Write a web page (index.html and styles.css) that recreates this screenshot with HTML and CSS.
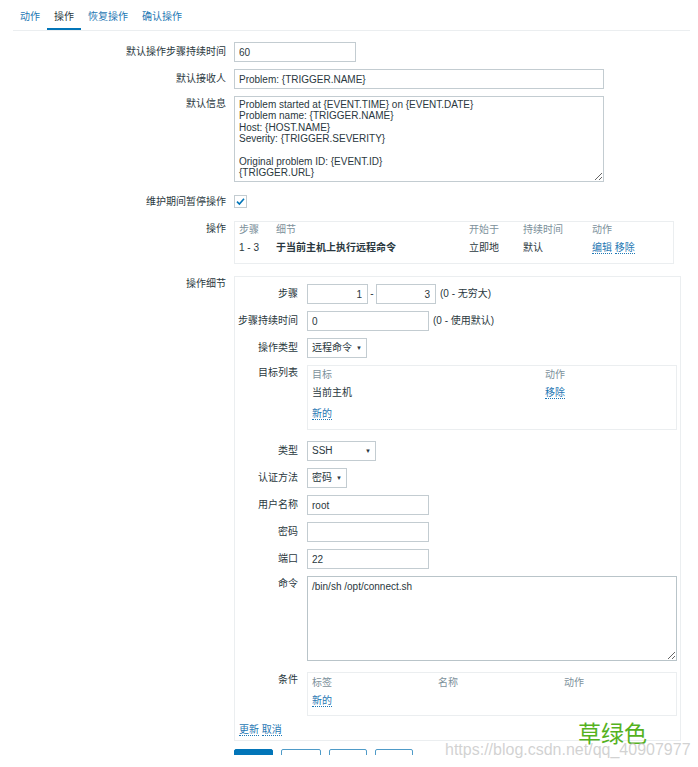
FILE: index.html
```html
<!DOCTYPE html>
<html lang="zh-CN">
<head>
    <meta charset="UTF-8">
    <meta name="viewport" content="width=device-width, initial-scale=1.0">
    <title>操作</title>
    <link rel="stylesheet" href="styles.css">
</head>
<body>
    <nav class="tabs">
        <a class="tab">动作</a>
        <a class="tab active">操作</a>
        <a class="tab">恢复操作</a>
        <a class="tab">确认操作</a>
    </nav>

    <form class="form">
        <div class="row">
            <label class="lbl">默认操作步骤持续时间</label>
            <input class="inp w122" value="60">
        </div>
        <div class="row">
            <label class="lbl">默认接收人</label>
            <input class="inp w370" value="Problem: {TRIGGER.NAME}">
        </div>
        <div class="row">
            <label class="lbl top">默认信息</label>
            <textarea class="txt msg">Problem started at {EVENT.TIME} on {EVENT.DATE}
Problem name: {TRIGGER.NAME}
Host: {HOST.NAME}
Severity: {TRIGGER.SEVERITY}

Original problem ID: {EVENT.ID}
{TRIGGER.URL}</textarea>
        </div>
        <div class="row check-row">
            <label class="lbl">维护期间暂停操作</label>
            <span class="check">
                <svg width="11" height="11" viewBox="0 0 11 11"><path d="M2 5.6 L4.4 8 L9 2.8" fill="none" stroke="#0275b8" stroke-width="1.6"/></svg>
            </span>
        </div>
        <div class="row ops-row">
            <label class="lbl top">操作</label>
            <div class="list ops">
                <div class="ops-grid head">
                    <span>步骤</span><span>细节</span><span>开始于</span><span>持续时间</span><span>动作</span>
                </div>
                <div class="ops-grid data">
                    <span>1 - 3</span><b>于当前主机上执行远程命令</b><span>立即地</span><span>默认</span>
                    <span><a class="link">编辑</a> <a class="link">移除</a></span>
                </div>
            </div>
        </div>
        <div class="row">
            <label class="lbl top">操作细节</label>
            <div class="details">
                <div class="row">
                    <label class="lbl sub">步骤</label>
                    <input class="inp num w61" value="1">
                    <span class="dash">-</span>
                    <input class="inp num w60" value="3">
                    <span class="hint">(0 - 无穷大)</span>
                </div>
                <div class="row">
                    <label class="lbl sub">步骤持续时间</label>
                    <input class="inp w122" value="0">
                    <span class="hint">(0 - 使用默认)</span>
                </div>
                <div class="row">
                    <label class="lbl sub">操作类型</label>
                    <div class="select w60"><span>远程命令</span><span class="caret">▼</span></div>
                </div>
                <div class="row box-row">
                    <label class="lbl sub top">目标列表</label>
                    <div class="list targets">
                        <div class="t-grid head"><span>目标</span><span>动作</span></div>
                        <div class="t-grid"><span>当前主机</span><span><a class="link">移除</a></span></div>
                        <div class="new"><a class="link">新的</a></div>
                    </div>
                </div>
                <div class="row">
                    <label class="lbl sub">类型</label>
                    <div class="select w69"><span>SSH</span><span class="caret">▼</span></div>
                </div>
                <div class="row">
                    <label class="lbl sub">认证方法</label>
                    <div class="select w40"><span>密码</span><span class="caret">▼</span></div>
                </div>
                <div class="row">
                    <label class="lbl sub">用户名称</label>
                    <input class="inp w122" value="root">
                </div>
                <div class="row">
                    <label class="lbl sub">密码</label>
                    <input class="inp w122" type="password" value="">
                </div>
                <div class="row">
                    <label class="lbl sub">端口</label>
                    <input class="inp w122" value="22">
                </div>
                <div class="row box-row">
                    <label class="lbl sub top">命令</label>
                    <textarea class="txt cmd">/bin/sh /opt/connect.sh</textarea>
                </div>
                <div class="row">
                    <label class="lbl sub top">条件</label>
                    <div class="list conds">
                        <div class="c-grid head"><span>标签</span><span>名称</span><span>动作</span></div>
                        <div class="new"><a class="link">新的</a></div>
                    </div>
                </div>
                <div class="actions"><a class="link">更新</a> <a class="link">取消</a></div>
            </div>
        </div>
        <div class="buttons">
            <button type="button" class="btn main"></button>
            <button type="button" class="btn"></button>
            <button type="button" class="btn w38"></button>
            <button type="button" class="btn w38"></button>
        </div>
    </form>

    <div class="brand">草绿色</div>
    <div class="url">https://blog.csdn.net/qq_40907977</div>
</body>
</html>
```

FILE: styles.css
```css
* {
    box-sizing: border-box;
}

body {
    margin: 0;
    background: #fff;
    color: #2a3840;
    font: 10px/14px "Liberation Sans", "Noto Sans CJK SC", sans-serif;
    position: relative;
    height: 767px;
    overflow: hidden;
}

/* tabs */
.tabs {
    display: flex;
    margin: 0 8px 0 13px;
    border-bottom: 1px solid #ebeef0;
}
.tab {
    padding: 10px 7px 4px;
    line-height: 14px;
    color: #1f78b4;
    border-bottom: 2px solid transparent;
}
.tab.active {
    color: #2a3840;
    border-bottom-color: #0275b8;
}

/* form layout */
.form {
    padding-top: 11px;
}
.row {
    display: flex;
    align-items: flex-start;
    margin-bottom: 7px;
}
.lbl {
    flex: none;
    width: 226px;
    margin-right: 8px;
    padding-top: 3px;
    text-align: right;
    line-height: 14px;
}
.lbl.top {
    padding-top: 1px;
}
.lbl.sub {
    width: 63px;
    margin-right: 9px;
}
.check-row {
    height: 25px;
    align-items: center;
    margin-bottom: 7px;
}
.check-row .lbl {
    padding-top: 0;
}
.ops-row {
    margin-bottom: 12px;
}
.box-row {
    margin-bottom: 11px;
}

/* controls */
.inp {
    height: 20px;
    border: 1px solid #c3ccd1;
    padding: 0 4px;
    font: inherit;
    color: inherit;
    background: #fff;
    outline: none;
}
.inp.num {
    text-align: right;
    padding-right: 5px;
}
.txt {
    display: block;
    border: 1px solid #c3ccd1;
    padding: 2px 4px;
    font: inherit;
    line-height: 11.4px;
    color: inherit;
    overflow: hidden;
    outline: none;
}
.msg {
    width: 370px;
    height: 86px;
}
.cmd {
    width: 370px;
    height: 85px;
    padding-top: 4px;
    border-color: #b9c4c9;
}
.w40 { width: 40px; }
.w60 { width: 60px; }
.w61 { width: 61px; }
.w69 { width: 69px; }
.w122 { width: 122px; }
.w370 { width: 370px; }

.dash {
    width: 8px;
    text-align: center;
    line-height: 20px;
}
.hint {
    margin-left: 4px;
    line-height: 20px;
}
.select {
    display: flex;
    justify-content: space-between;
    align-items: center;
    height: 20px;
    border: 1px solid #c3ccd1;
    padding: 0 4px;
}
.caret {
    font-size: 6px;
    line-height: 8px;
}
.check {
    display: flex;
    align-items: center;
    justify-content: center;
    width: 13px;
    height: 13px;
    border: 1px solid #c3ccd1;
}
.check svg {
    display: block;
}

.link {
    color: #1f78b4;
    border-bottom: 1px dotted #1f78b4;
    cursor: pointer;
}

/* list boxes */
.list {
    border: 1px solid #ebeef0;
    padding: 0 4px;
}
.head {
    color: #7d919b;
}
.ops {
    width: 440px;
    height: 43px;
}
.ops-grid {
    display: grid;
    grid-template-columns: 37px 193px 54px 69px 1fr;
    line-height: 14px;
    padding-top: 1px;
}
.ops-grid.data {
    margin-top: 3px;
}
.targets {
    width: 370px;
    height: 65px;
}
.t-grid {
    display: grid;
    grid-template-columns: 233px 1fr;
    line-height: 18px;
}
.new {
    line-height: 18px;
    margin-top: 3px;
}
.conds {
    width: 370px;
    height: 44px;
    padding-top: 1px;
}
.c-grid {
    display: grid;
    grid-template-columns: 126px 126px 1fr;
    line-height: 18px;
}
.conds .new {
    margin-top: 0;
}

.details {
    width: 447px;
    border: 1px solid #ebeef0;
    padding: 7px 3px 3px 0;
}
.details .row:last-of-type {
    margin-bottom: 8px;
}
.actions {
    padding-left: 4px;
    line-height: 14px;
}

/* bottom buttons, cut off by the screenshot edge */
.buttons {
    display: flex;
    gap: 8px;
    margin: 8px 0 0 234px;
    height: 6px;
    overflow: hidden;
}
.btn {
    flex: none;
    width: 40px;
    height: 24px;
    border: 1px solid #4f9bc8;
    border-radius: 2px;
    background: #fff;
}
.btn.main {
    background: #0275b8;
    border-color: #0275b8;
    width: 39px;
}
.btn.w38 {
    width: 38px;
}

/* watermark */
.brand {
    position: absolute;
    left: 578px;
    top: 721px;
    font: 23px/22px "Noto Sans CJK SC", sans-serif;
    color: #55b21e;
}
.url {
    position: absolute;
    left: 445px;
    top: 743px;
    font: 16px/14px "Liberation Sans", sans-serif;
    color: rgba(190, 190, 190, 0.7);
}
```
